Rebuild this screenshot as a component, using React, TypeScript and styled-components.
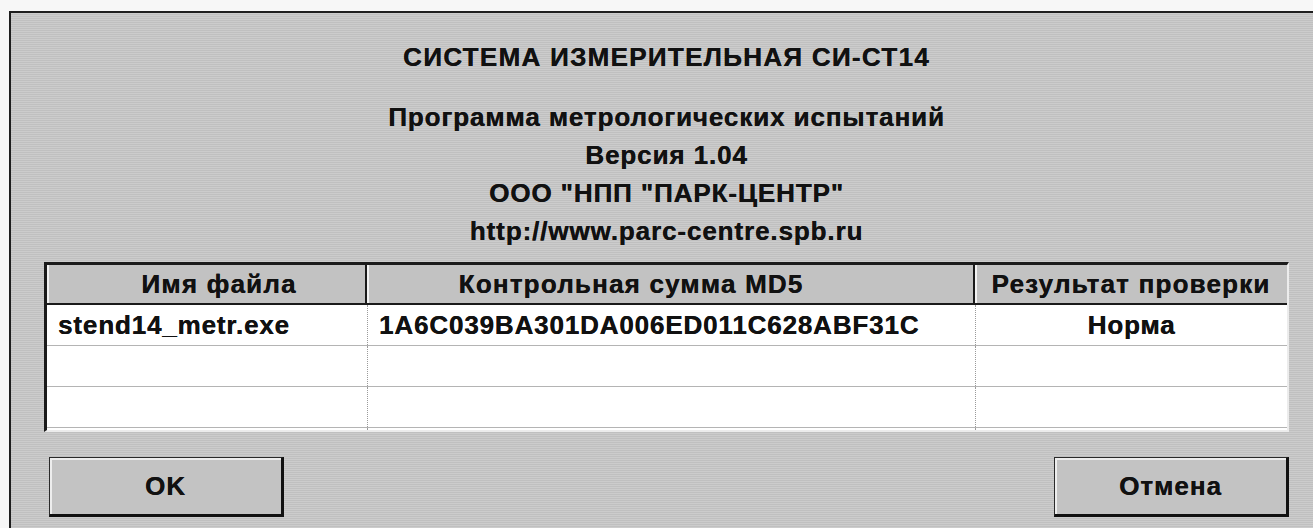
import styled, { createGlobalStyle } from "styled-components";

const GlobalStyle = createGlobalStyle`
  html, body {
    margin: 0;
    padding: 0;
    background: #f7f7f7;
  }
  body {
    font-family: "Liberation Sans", Arial, sans-serif;
    overflow: hidden;
  }
`;

const files = [
  { name: "stend14_metr.exe", md5: "1A6C039BA301DA006ED011C628ABF31C", result: "Норма" },
  { name: "", md5: "", result: "" },
  { name: "", md5: "", result: "" },
  { name: "", md5: "", result: "" },
];

const App = () => {
  return (
    <>
      <GlobalStyle />
      <Page>
        <Dialog>
          <Heading>
            <Title>СИСТЕМА ИЗМЕРИТЕЛЬНАЯ СИ-СТ14</Title>
            <Info>
              <div>Программа метрологических испытаний</div>
              <div>Версия 1.04</div>
              <div>ООО "НПП "ПАРК-ЦЕНТР"</div>
              <div>http://www.parc-centre.spb.ru</div>
            </Info>
          </Heading>

          <Table>
            <HeaderRow>
              <HeaderCell $padLeft={26}>Имя файла</HeaderCell>
              <HeaderCell $padRight={78}>Контрольная сумма MD5</HeaderCell>
              <HeaderCell $last>Результат проверки</HeaderCell>
            </HeaderRow>
            {files.map((f, i) => (
              <Row key={i}>
                <Cell>{f.name}</Cell>
                <Cell>{f.md5}</Cell>
                <Cell $center $last>
                  {f.result}
                </Cell>
              </Row>
            ))}
          </Table>

          <Buttons>
            <Button>OK</Button>
            <Button>Отмена</Button>
          </Buttons>
        </Dialog>
      </Page>
    </>
  );
};

const Page = styled.div`
  width: 1313px;
  height: 528px;
  padding: 11px 0 0 9px;
  box-sizing: border-box;
`;

const Dialog = styled.div`
  height: 100%;
  box-sizing: border-box;
  border-top: 2px solid #1e1e1e;
  border-left: 2px solid #1e1e1e;
  background-color: #c6c6c6;
  background-image: repeating-linear-gradient(
    0deg,
    rgba(255, 255, 255, 0.1) 0 1px,
    rgba(0, 0, 0, 0.03) 1px 2px
  );
  padding: 30px 24px 0 33px;
  display: flex;
  flex-direction: column;
  color: #111;
  font-weight: bold;
  text-shadow: 0.3px 0 0 #111;
`;

const Heading = styled.div`
  display: flex;
  flex-direction: column;
  align-items: center;
  text-align: center;
`;

const Title = styled.div`
  font-size: 26px;
  line-height: 28px;
  letter-spacing: 1.3px;
`;

const Info = styled.div`
  margin-top: 27px;
  font-size: 26px;
  line-height: 38px;
  letter-spacing: 0.9px;
`;

const Table = styled.div`
  margin-top: 12px;
  height: 170px;
  overflow: hidden;
  box-sizing: border-box;
  border-top: 3px solid #1a1a1a;
  border-left: 3px solid #1a1a1a;
  border-right: 2px solid #ececec;
  border-bottom: 2px solid #ececec;
  background: #fff;
`;

const HeaderRow = styled.div`
  display: grid;
  grid-template-columns: 320px 608px 1fr;
  height: 38px;
  border-bottom: 2px solid #1a1a1a;
  background: #c2c2c2;
`;

const HeaderCell = styled.div<{ $padLeft?: number; $padRight?: number; $last?: boolean }>`
  display: flex;
  align-items: center;
  justify-content: center;
  padding-left: ${(p) => p.$padLeft ?? 0}px;
  padding-right: ${(p) => p.$padRight ?? 0}px;
  font-size: 26px;
  letter-spacing: 1.2px;
  box-shadow: inset 2px 0 0 #f2f2f2;
  border-right: ${(p) => (p.$last ? "none" : "2px solid #1a1a1a")};
  white-space: nowrap;
`;

const Row = styled.div`
  display: grid;
  grid-template-columns: 321px 608px 1fr;
  height: 41px;
  box-sizing: border-box;
  border-bottom: 1px solid #b4b4b4;
`;

const Cell = styled.div<{ $center?: boolean; $last?: boolean }>`
  display: flex;
  align-items: center;
  justify-content: ${(p) => (p.$center ? "center" : "flex-start")};
  padding: 0 11px;
  font-size: 26px;
  letter-spacing: 0.85px;
  border-right: ${(p) => (p.$last ? "none" : "1px dotted #9a9a9a")};
  white-space: nowrap;
`;

const Buttons = styled.div`
  margin-top: 25px;
  padding-left: 5px;
  display: flex;
  justify-content: space-between;
`;

const Button = styled.button`
  width: 235px;
  height: 60px;
  box-sizing: border-box;
  background: #c3c3c3;
  border-style: solid;
  border-width: 1px 3px 3px 1px;
  border-color: #2a2a2a #111 #111 #2a2a2a;
  box-shadow: inset 2px 2px 0 #ededed;
  font-family: "Liberation Sans", Arial, sans-serif;
  font-weight: bold;
  font-size: 26px;
  letter-spacing: 1px;
  color: #111;
  text-shadow: 0.3px 0 0 #111;
  cursor: pointer;
`;

export default App;
